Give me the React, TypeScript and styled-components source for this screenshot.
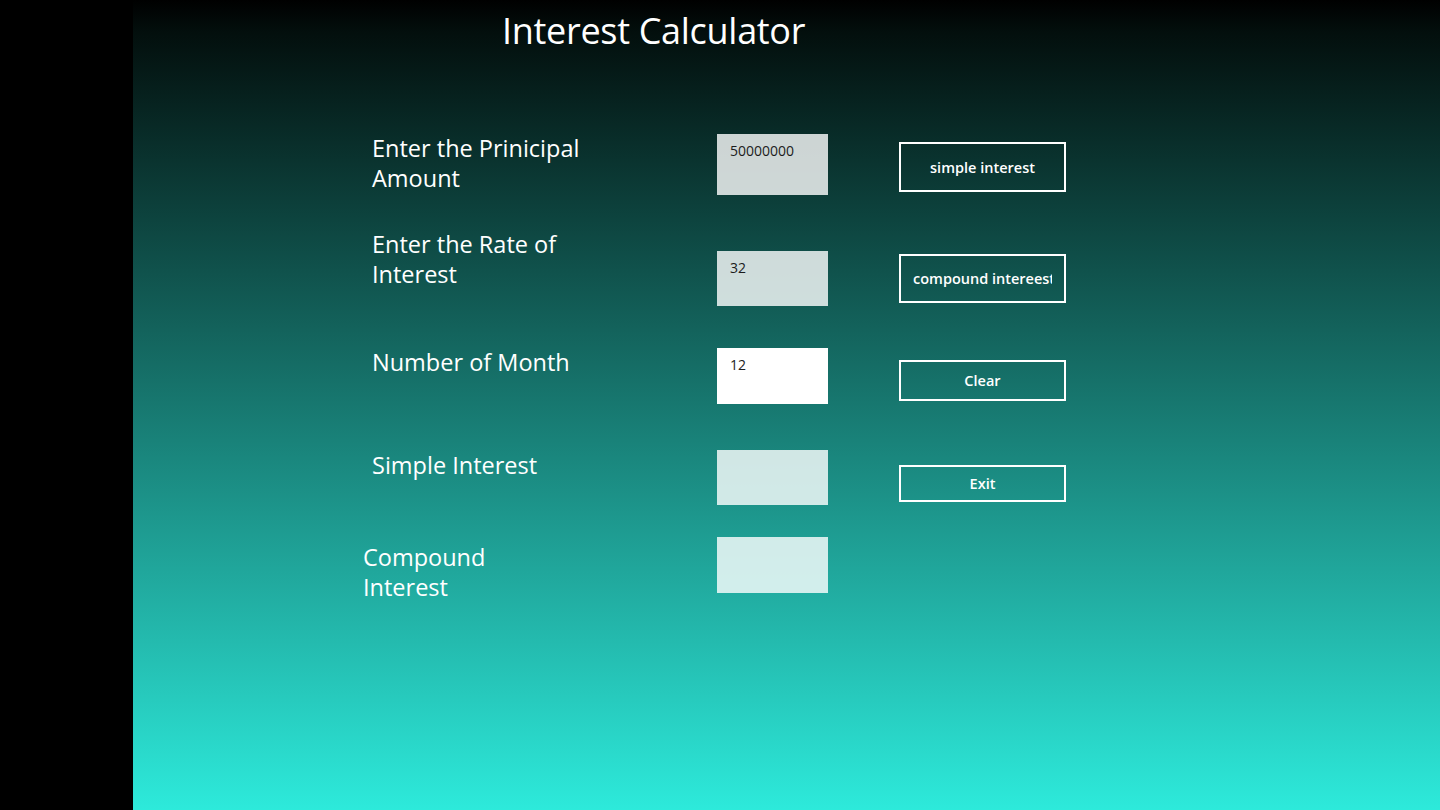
import React from "react";
import styled, { createGlobalStyle } from "styled-components";

const Global = createGlobalStyle`
  html, body { margin: 0; padding: 0; background: #000; }
  body { font-family: "Open Sans", "Noto Sans", sans-serif; }
  * { box-sizing: border-box; }
`;

const Screen = styled.div`
  width: 1440px;
  height: 810px;
  display: flex;
  background: #000;
  overflow: hidden;
`;

const SideStrip = styled.div`
  width: 133px;
  flex: none;
  background: #000;
`;

const Panel = styled.main`
  flex: 1;
  background: linear-gradient(180deg, #000000 0%, #030f0d 4%, #2deadb 100%);
  display: flex;
  flex-direction: column;
`;

const Title = styled.h1`
  margin: 9px 0 0 369px;
  font-weight: 400;
  font-size: 36px;
  line-height: 44px;
  color: #fff;
  letter-spacing: -0.3px;
`;

const Form = styled.div`
  margin-top: 80px;
  margin-left: 230px;
  display: flex;
  flex-direction: column;
`;

const Row = styled.div<{ $h: number }>`
  height: ${(p) => p.$h}px;
  display: grid;
  grid-template-columns: 354px 182px 167px;
  align-items: start;
`;

const Label = styled.div<{ $top?: number; $shift?: number }>`
  margin-top: ${(p) => p.$top ?? 0}px;
  margin-left: ${(p) => 9 + (p.$shift ?? 0)}px;
  font-size: 23.5px;
  line-height: 30px;
  color: #fff;
  width: 250px;
`;

const Field = styled.div<{ $top: number; $h: number; $active?: boolean }>`
  margin-top: ${(p) => p.$top}px;
  width: 111px;
  height: ${(p) => p.$h}px;
  background: ${(p) => (p.$active ? "#ffffff" : "rgba(255,255,255,0.8)")};
  padding: 7px 13px;
  font-size: 14px;
  line-height: 20px;
  color: #1c1c1c;
`;

const Button = styled.button<{ $top: number; $h: number }>`
  margin-top: ${(p) => p.$top}px;
  width: 167px;
  height: ${(p) => p.$h}px;
  border: 2px solid #fff;
  background: transparent;
  color: #fff;
  font-family: "Open Sans", "Noto Sans", sans-serif;
  font-weight: 600;
  font-size: 14.5px;
  padding: 0 12px;
  cursor: pointer;
`;

const ButtonText = styled.span`
  display: block;
  white-space: nowrap;
  overflow: hidden;
  text-align: center;
`;

export default function App() {
  return (
    <>
      <Global />
      <Screen>
        <SideStrip />
        <Panel>
          <Title>Interest Calculator</Title>
          <Form>
            <Row $h={96}>
              <Label>Enter the Prinicipal<br />Amount</Label>
              <Field $top={1} $h={61}>50000000</Field>
              <Button $top={9} $h={50}><ButtonText>simple interest</ButtonText></Button>
            </Row>
            <Row $h={118}>
              <Label>Enter the Rate of<br />Interest</Label>
              <Field $top={22} $h={55}>32</Field>
              <Button $top={25} $h={49}><ButtonText>compound intereest</ButtonText></Button>
            </Row>
            <Row $h={103}>
              <Label>Number of Month</Label>
              <Field $top={1} $h={56} $active>12</Field>
              <Button $top={13} $h={41}><ButtonText>Clear</ButtonText></Button>
            </Row>
            <Row $h={87}>
              <Label>Simple Interest</Label>
              <Field $top={0} $h={55} />
              <Button $top={15} $h={37}><ButtonText>Exit</ButtonText></Button>
            </Row>
            <Row $h={80}>
              <Label $top={5} $shift={-9}>Compound<br />Interest</Label>
              <Field $top={0} $h={56} />
            </Row>
          </Form>
        </Panel>
      </Screen>
    </>
  );
}
